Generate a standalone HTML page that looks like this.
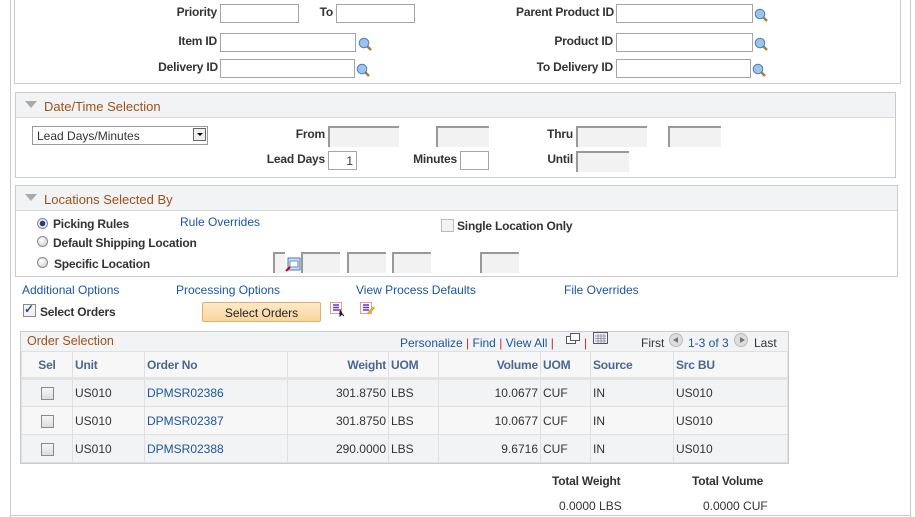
<!DOCTYPE html>
<html><head><meta charset="utf-8"><style>
body{margin:0;width:915px;height:517px;position:relative;overflow:hidden;background:#fff;font-family:"Liberation Sans",Arial,sans-serif;font-size:12px;color:#333}
.a{position:absolute}
.l{position:absolute;font-weight:bold;color:#333;white-space:nowrap;letter-spacing:-0.2px}
.in{position:absolute;height:17px;border:1px solid #a5a5a5;background:#fff;box-sizing:border-box}
.ds{position:absolute;height:21px;background:#f2f2f2;border-top:2px solid #999;border-left:2px solid #999;box-sizing:border-box}
.lk{position:absolute;color:#1d55a0;white-space:nowrap}
.box{position:absolute;border:1px solid #c8cbcf;box-sizing:border-box}
.hd{position:absolute;left:0;right:0;top:0;height:24px;background:#f1f3f4;border-bottom:1px solid #d6d9dc;color:#a24f15;font-size:13px}
.tri{position:absolute;left:9px;top:8px;width:0;height:0;border-left:6px solid transparent;border-right:6px solid transparent;border-top:7px solid #aaa}
.mag{position:absolute;width:14px;height:14px}
.rad{position:absolute;width:11px;height:11px;border-radius:50%;border:1px solid #888;background:radial-gradient(circle at 40% 35%,#fff,#ccc);box-sizing:border-box}
.cb{position:absolute;width:13px;height:13px;border:1px solid #8a8a8a;background:linear-gradient(#f6f6f6,#ddd);box-sizing:border-box}
table{border-collapse:collapse;position:absolute;left:21px;top:351px;width:767px;table-layout:fixed}
td{border:1px solid #e0e0e0;height:28px;padding:0 2px;font-size:12px;color:#333;box-sizing:border-box}
th{height:27px;box-sizing:border-box;border:1px solid #e0e0e0;border-bottom:3px solid #e3e3e3;background:#f7f7f7;color:#4a6790;font-weight:bold;text-align:left;padding:0 2px;letter-spacing:-0.2px}
tr.g td{background:#f7f7f7}
</style></head><body>
<div class="a" style="left:10px;top:0;width:1px;height:517px;background:#c8cbcf"></div>
<div class="a" style="left:910px;top:0;width:1px;height:517px;background:#c8cbcf"></div>
<div class="a" style="left:10px;top:515px;width:901px;height:1px;background:#c8cbcf"></div>

<!-- top box -->
<div class="box" style="left:14px;top:-2px;width:887px;height:86px"></div>
<div class="l" style="right:698px;top:5px">Priority</div><div class="in" style="left:220px;top:4px;width:79px;height:19px"></div>
<div class="l" style="right:582px;top:5px">To</div><div class="in" style="left:336px;top:4px;width:79px;height:19px"></div>
<div class="l" style="right:698px;top:34px">Item ID</div><div class="in" style="left:220px;top:33px;width:136px;height:19px"></div>
<div class="l" style="right:697px;top:60px">Delivery ID</div><div class="in" style="left:220px;top:59px;width:135px;height:19px"></div>
<div class="l" style="right:301px;top:5px">Parent Product ID</div><div class="in" style="left:616px;top:4px;width:137px;height:19px"></div>
<div class="l" style="right:302px;top:34px">Product ID</div><div class="in" style="left:616px;top:33px;width:137px;height:19px"></div>
<div class="l" style="right:302px;top:60px">To Delivery ID</div><div class="in" style="left:616px;top:59px;width:135px;height:19px"></div>
<svg class="mag" style="left:358px;top:37px" viewBox="0 0 14 14"><line x1="8" y1="8" x2="13" y2="13" stroke="#b07a3a" stroke-width="2.5"/><circle cx="6" cy="6" r="4.8" fill="#9cc3ea" stroke="#4d7fb8"/></svg>
<svg class="mag" style="left:356px;top:63px" viewBox="0 0 14 14"><line x1="8" y1="8" x2="13" y2="13" stroke="#b07a3a" stroke-width="2.5"/><circle cx="6" cy="6" r="4.8" fill="#9cc3ea" stroke="#4d7fb8"/></svg>
<svg class="mag" style="left:754px;top:8px" viewBox="0 0 14 14"><line x1="8" y1="8" x2="13" y2="13" stroke="#b07a3a" stroke-width="2.5"/><circle cx="6" cy="6" r="4.8" fill="#9cc3ea" stroke="#4d7fb8"/></svg>
<svg class="mag" style="left:754px;top:37px" viewBox="0 0 14 14"><line x1="8" y1="8" x2="13" y2="13" stroke="#b07a3a" stroke-width="2.5"/><circle cx="6" cy="6" r="4.8" fill="#9cc3ea" stroke="#4d7fb8"/></svg>
<svg class="mag" style="left:752px;top:63px" viewBox="0 0 14 14"><line x1="8" y1="8" x2="13" y2="13" stroke="#b07a3a" stroke-width="2.5"/><circle cx="6" cy="6" r="4.8" fill="#9cc3ea" stroke="#4d7fb8"/></svg>

<!-- date box -->
<div class="box" style="left:15px;top:92px;width:881px;height:86px"><div class="hd"><div class="tri"></div><span class="a" style="left:28px;top:6px">Date/Time Selection</span></div></div>
<div class="in" style="left:32px;top:126px;width:176px;height:19px;border-color:#999"><span class="a" style="left:4px;top:2px">Lead Days/Minutes</span><div class="a" style="right:1px;top:1px;width:13px;height:13px;border:1px solid #666;box-sizing:border-box;background:#eee"><div class="a" style="left:3px;top:4px;border-left:3px solid transparent;border-right:3px solid transparent;border-top:3px solid #000"></div></div></div>
<div class="l" style="right:590px;top:127px">From</div><div class="ds" style="left:328px;top:126px;width:71px"></div>
<div class="ds" style="left:436px;top:126px;width:53px"></div>
<div class="l" style="right:342px;top:127px">Thru</div><div class="ds" style="left:576px;top:126px;width:71px"></div>
<div class="ds" style="left:668px;top:126px;width:53px"></div>
<div class="l" style="right:590px;top:152px">Lead Days</div><div class="in" style="left:328px;top:151px;width:29px;height:19px"><span class="a" style="right:3px;top:2px">1</span></div>
<div class="l" style="right:458px;top:152px">Minutes</div><div class="in" style="left:460px;top:151px;width:29px;height:19px"></div>
<div class="l" style="right:342px;top:152px">Until</div><div class="ds" style="left:576px;top:151px;width:53px"></div>

<!-- locations box -->
<div class="box" style="left:15px;top:185px;width:883px;height:92px"><div class="hd"><div class="tri"></div><span class="a" style="left:28px;top:6px">Locations Selected By</span></div></div>
<div class="rad" style="left:37px;top:218px;background:radial-gradient(circle,#1d3f7a 0 2.5px,#eef 3px,#ccc)"></div>
<div class="l" style="left:53px;top:217px">Picking Rules</div>
<div class="lk" style="left:180px;top:215px">Rule Overrides</div>
<div class="rad" style="left:37px;top:236px"></div><div class="l" style="left:53px;top:236px">Default Shipping Location</div>
<div class="rad" style="left:37px;top:257px"></div><div class="l" style="left:54px;top:257px">Specific Location</div>
<div class="cb" style="left:441px;top:219px;background:#f3f3f3;border-color:#bbb"></div>
<div class="l" style="left:457px;top:219px">Single Location Only</div>
<div class="ds" style="left:273px;top:252px;width:12px"></div>
<svg class="a" style="left:285px;top:257px" width="16" height="15" viewBox="0 0 16 15"><rect x="3" y="1" width="12" height="12" fill="#cfe0f5" stroke="#4a78b8"/><rect x="5" y="4" width="8" height="6" fill="#fff" stroke="#6a8fc8"/><path d="M1 14 L5 10" stroke="#c00" stroke-width="2"/></svg>
<div class="ds" style="left:301px;top:252px;width:39px"></div>
<div class="ds" style="left:347px;top:252px;width:39px"></div>
<div class="ds" style="left:392px;top:252px;width:39px"></div>
<div class="ds" style="left:480px;top:252px;width:39px"></div>

<!-- links -->
<div class="lk" style="left:22px;top:283px">Additional Options</div>
<div class="lk" style="left:176px;top:283px">Processing Options</div>
<div class="lk" style="left:356px;top:283px">View Process Defaults</div>
<div class="lk" style="left:564px;top:283px">File Overrides</div>
<div class="cb" style="left:23px;top:304px;background:#f3f3f3"><span class="a" style="left:0;top:-3px;font-size:12px;color:#2a4e8a;font-weight:bold">✓</span></div>
<div class="l" style="left:40px;top:305px">Select Orders</div>
<div class="a" style="left:202px;top:302px;width:119px;height:20px;border:1px solid #e0b070;border-radius:2px;background:linear-gradient(#fde9c8,#f8d69e);box-sizing:border-box;text-align:center;line-height:21px;color:#222">Select Orders</div>
<svg class="a" style="left:330px;top:302px" width="16" height="15" viewBox="0 0 16 15"><rect x="0.5" y="0.5" width="11" height="11" fill="none" stroke="#d33" stroke-dasharray="1 1"/><path d="M3 3h6M3 5.5h6M3 8h6" stroke="#5a3cc8" stroke-width="1.5"/><path d="M10 7 L10 14 L12 12 L14 14" fill="#222" stroke="#222"/></svg>
<svg class="a" style="left:360px;top:302px" width="16" height="15" viewBox="0 0 16 15"><rect x="0.5" y="0.5" width="11" height="11" fill="none" stroke="#d33" stroke-dasharray="1 1"/><path d="M3 3h6M3 5.5h6M3 8h6" stroke="#5a3cc8" stroke-width="1.5"/><path d="M8 12 L14 5" stroke="#d9b030" stroke-width="2.5"/></svg>

<!-- grid -->
<div class="box" style="left:20px;top:331px;width:769px;height:133px;background:#f1f3f4"></div>
<div class="a" style="left:27px;top:334px;color:#a24f15;font-size:12.5px">Order Selection</div>
<div class="a" style="left:400px;top:336px;color:#1d55a0;white-space:nowrap">Personalize <span style="color:#b33">|</span> Find <span style="color:#b33">|</span> View All <span style="color:#b33">|</span></div>
<svg class="a" style="left:566px;top:333px" width="15" height="12"><rect x="0.5" y="3.5" width="9" height="7" fill="#fff" stroke="#556"/><rect x="4.5" y="0.5" width="9" height="7" fill="#fff" stroke="#556"/></svg>
<span class="a" style="left:584px;top:336px;color:#b33">|</span>
<svg class="a" style="left:593px;top:332px" width="15" height="12"><rect x="0.5" y="0.5" width="14" height="11" fill="#eef" stroke="#556"/><path d="M2 4h11M2 6.5h11M2 9h11M5 2v9M8 2v9M11 2v9" stroke="#889" stroke-width="0.8"/></svg>
<div class="a" style="left:641px;top:336px;color:#333">First</div>
<div class="a" style="left:669px;top:333px;width:14px;height:14px;border-radius:50%;background:#ddd;border:1px solid #bbb;box-sizing:border-box"><div class="a" style="left:3px;top:3px;border-top:3px solid transparent;border-bottom:3px solid transparent;border-right:5px solid #777"></div></div>
<div class="a" style="left:688px;top:336px;color:#1d55a0">1-3 of 3</div>
<div class="a" style="left:734px;top:333px;width:14px;height:14px;border-radius:50%;background:#ddd;border:1px solid #bbb;box-sizing:border-box"><div class="a" style="left:5px;top:3px;border-top:3px solid transparent;border-bottom:3px solid transparent;border-left:5px solid #777"></div></div>
<div class="a" style="left:754px;top:336px;color:#333">Last</div>
<table>
<colgroup><col style="width:51px"><col style="width:72px"><col style="width:143px"><col style="width:101px"><col style="width:50px"><col style="width:102px"><col style="width:50px"><col style="width:83px"><col style="width:114px"></colgroup>
<tr><th style="text-align:center">Sel</th><th>Unit</th><th>Order No</th><th style="text-align:right">Weight</th><th>UOM</th><th style="text-align:right">Volume</th><th>UOM</th><th>Source</th><th>Src BU</th></tr>
<tr><td style="text-align:center"><span class="cb" style="position:relative;display:inline-block;vertical-align:middle"></span></td><td>US010</td><td style="color:#1d55a0">DPMSR02386</td><td style="text-align:right">301.8750</td><td>LBS</td><td style="text-align:right">10.0677</td><td>CUF</td><td>IN</td><td>US010</td></tr>
<tr class="g"><td style="text-align:center"><span class="cb" style="position:relative;display:inline-block;vertical-align:middle"></span></td><td>US010</td><td style="color:#1d55a0">DPMSR02387</td><td style="text-align:right">301.8750</td><td>LBS</td><td style="text-align:right">10.0677</td><td>CUF</td><td>IN</td><td>US010</td></tr>
<tr><td style="text-align:center"><span class="cb" style="position:relative;display:inline-block;vertical-align:middle"></span></td><td>US010</td><td style="color:#1d55a0">DPMSR02388</td><td style="text-align:right">290.0000</td><td>LBS</td><td style="text-align:right">9.6716</td><td>CUF</td><td>IN</td><td>US010</td></tr>
</table>
<div class="l" style="left:552px;top:474px">Total Weight</div>
<div class="l" style="left:692px;top:474px">Total Volume</div>
<div class="a" style="left:559px;top:499px">0.0000 LBS</div>
<div class="a" style="left:703px;top:499px">0.0000 CUF</div>
</body></html>
